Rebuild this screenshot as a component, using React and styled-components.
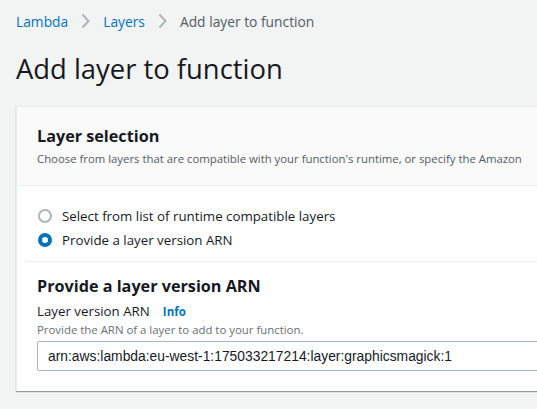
import styled, { createGlobalStyle } from "styled-components";

const GlobalStyle = createGlobalStyle`
  html, body {
    margin: 0;
    padding: 0;
    background: #f2f3f3;
    font-family: "Open Sans", "Noto Sans", sans-serif;
    color: #16191f;
    overflow: hidden;
  }
`;

const Page = styled.div`
  width: 537px;
  height: 409px;
  padding: 0 0 0 16px;
  box-sizing: border-box;
  overflow: hidden;
`;

const Crumbs = styled.nav`
  display: flex;
  align-items: center;
  gap: 13px;
  height: 20px;
  margin-top: 11px;
  font-size: 13.8px;
  white-space: nowrap;
`;

const Crumb = styled.a`
  color: ${(p) => (p.$current ? "#545b64" : "#0073bb")};
  text-decoration: none;
`;

const Chevron = () => (
  <svg width="9" height="16" viewBox="0 0 9 16">
    <path d="M1.5 1.5 L7.5 8 L1.5 14.5" fill="none" stroke="#aab7b8" strokeWidth="2" />
  </svg>
);

const Title = styled.h1`
  margin: 18px 0 0 0;
  font-size: 27.4px;
  font-weight: 400;
  line-height: 40px;
  white-space: nowrap;
`;

const Card = styled.section`
  margin-top: 17px;
  width: 560px;
  background: #fff;
  border-left: 1px solid #eaeded;
  border-top: 1px solid #eaeded;
  box-shadow: 0 1px 1px 0 rgba(0, 28, 36, 0.3), 1px 1px 1px 0 rgba(0, 28, 36, 0.15);
`;

const CardHeader = styled.header`
  background: #fafafa;
  border-bottom: 1px solid #eaeded;
  padding: 16px 20px 18px;
`;

const Heading = styled.h2`
  margin: 0;
  font-size: 16.2px;
  font-weight: 700;
  line-height: 26px;
  white-space: nowrap;
`;

const Description = styled.p`
  margin: 2px 0 0;
  font-size: 11.35px;
  line-height: 16px;
  color: #545b64;
  white-space: nowrap;
`;

const RadioGroup = styled.div`
  display: flex;
  flex-direction: column;
  gap: 4px;
  padding: 20px 20px 11px;
`;

const RadioRow = styled.label`
  display: flex;
  align-items: center;
  gap: 10px;
  height: 20px;
  font-size: 13.3px;
  white-space: nowrap;
`;

const RadioDot = styled.span`
  box-sizing: border-box;
  width: 14px;
  height: 14px;
  border-radius: 50%;
  border: ${(p) => (p.$checked ? "4px solid #0073bb" : "2px solid #aab7b8")};
  background: #fff;
  margin-left: 1px;
`;

const Section = styled.div`
  margin-left: 10px;
  border-top: 1px solid #eaeded;
  padding: 11px 0 20px 10px;
`;

const LabelRow = styled.div`
  display: flex;
  align-items: baseline;
  gap: 13px;
  margin-top: 2px;
  font-size: 13.3px;
  line-height: 20px;
  white-space: nowrap;
`;

const Info = styled.a`
  font-size: 11.5px;
  font-weight: 700;
  color: #0073bb;
  text-decoration: none;
`;

const Hint = styled.div`
  font-size: 11.4px;
  line-height: 16px;
  color: #687078;
  white-space: nowrap;
`;

const Input = styled.input`
  display: block;
  box-sizing: border-box;
  margin-top: 3px;
  width: 530px;
  height: 30px;
  padding: 0 10px;
  border: 1px solid #aab7b8;
  border-radius: 2px;
  font-family: "Liberation Sans", Arial, sans-serif;
  font-size: 13.85px;
  color: #16191f;
  background: #fff;
  outline: none;
`;

export default function App() {
  return (
    <>
      <GlobalStyle />
      <Page>
        <Crumbs>
          <Crumb href="#">Lambda</Crumb>
          <Chevron />
          <Crumb href="#">Layers</Crumb>
          <Chevron />
          <Crumb $current>Add layer to function</Crumb>
        </Crumbs>
        <Title>Add layer to function</Title>
        <Card>
          <CardHeader>
            <Heading>Layer selection</Heading>
            <Description>
              Choose from layers that are compatible with your function's runtime, or specify the Amazon
            </Description>
          </CardHeader>
          <RadioGroup>
            <RadioRow>
              <RadioDot />
              Select from list of runtime compatible layers
            </RadioRow>
            <RadioRow>
              <RadioDot $checked />
              Provide a layer version ARN
            </RadioRow>
          </RadioGroup>
          <Section>
            <Heading>Provide a layer version ARN</Heading>
            <LabelRow>
              Layer version ARN
              <Info href="#">Info</Info>
            </LabelRow>
            <Hint>Provide the ARN of a layer to add to your function.</Hint>
            <Input readOnly value="arn:aws:lambda:eu-west-1:175033217214:layer:graphicsmagick:1" />
          </Section>
        </Card>
      </Page>
    </>
  );
}
